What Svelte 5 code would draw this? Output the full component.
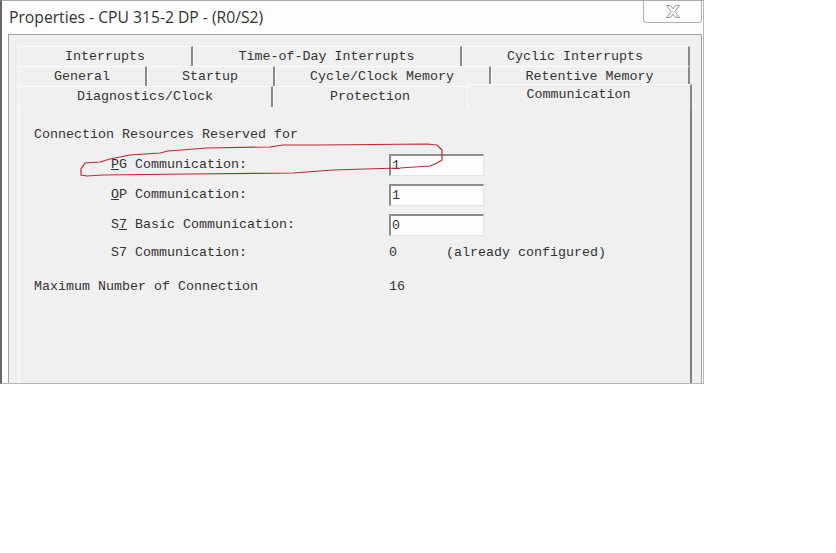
<script>
  const rows1 = ['Interrupts', 'Time-of-Day Interrupts', 'Cyclic Interrupts'];
  const rows2 = ['General', 'Startup', 'Cycle/Clock Memory', 'Retentive Memory'];
  const red = 'M87 176 L81 175 L81 169 L85 163 L100 162 L110 159 L130 155 L160 153 L168 151 L207 148 L270 147 L283 145 L320 145 L427 144 L437 145 L442 150 L442 160 L437 163 L430 166 L400 168 L365 169 L333 170 L320 171 L293 173 L187 174 L103 175 L87 176';
</script>

<div class="page">
  <div class="window">
    <header class="titlebar">
      <span class="title">Properties - CPU 315-2 DP - (R0/S2)</span>
      <div class="close">
        <svg width="16" height="13" viewBox="0 0 16 13">
          <path d="M1.5 0.5 H5.5 L8 3.7 L10.5 0.5 H14.5 L10 6.5 L14.5 12.5 H10.5 L8 9.3 L5.5 12.5 H1.5 L6 6.5 Z" fill="#f4f4f4" stroke="#9a9a9a" stroke-width="1"/>
        </svg>
      </div>
    </header>
    <div class="client">
      <div class="tabrow r1">
        {#each rows1 as t}<div class="tab">{t}</div>{/each}
      </div>
      <div class="tabrow r2">
        {#each rows2 as t}<div class="tab">{t}</div>{/each}
      </div>
      <div class="tabrow r3">
        <div class="tab">Diagnostics/Clock</div>
        <div class="tab">Protection</div>
        <div class="tab active">Communication</div>
      </div>
      <div class="panel">
        <div class="heading">Connection Resources Reserved for</div>
        <div class="form">
          <div class="label"><u>P</u>G Communication:</div>
          <div class="field">1</div>
          <div class="label"><u>O</u>P Communication:</div>
          <div class="field">1</div>
          <div class="label">S<u>7</u> Basic Communication:</div>
          <div class="field">0</div>
        </div>
        <div class="static">
          <span class="label">S7 Communication:</span>
          <span class="val">0</span>
          <span>(already configured)</span>
        </div>
        <div class="max">
          <span class="maxlabel">Maximum Number of Connection</span>
          <span>16</span>
        </div>
      </div>
    </div>
  </div>
  <svg class="ink" width="836" height="553" viewBox="0 0 836 553">
    <path d={red} fill="none" stroke="#c0272d" stroke-width="1.2"/>
  </svg>
</div>

<style>
  :global(body) { margin: 0; background: #fff; }
  .page { position: relative; width: 836px; height: 553px; background: #fff; overflow: hidden; }
  .window {
    box-sizing: border-box; width: 704px; height: 384px; overflow: hidden;
    background: #fdfdfd; border-top: 1px solid #a8a8a8; border-left: 2px solid #666;
    border-right: 1px solid #b8b8b8; border-bottom: 1px solid #b4b4b4; padding-left: 6px; padding-right: 1px;
    display: flex; flex-direction: column;
  }
  .titlebar { height: 33px; flex: none; display: flex; justify-content: space-between; align-items: flex-start; }
  .title { font: 15.7px/33px "Open Sans", sans-serif; color: #333; padding-left: 1px; }
  .close {
    box-sizing: border-box; width: 59px; height: 23px; margin-top: -1px;
    border: 1px solid #b0b0b0; border-top: none; border-radius: 0 0 4px 4px;
    display: flex; align-items: center; justify-content: center; background: #fdfdfd;
  }
  .client {
    flex: 1; box-sizing: border-box; background: #f0f0f0; border: 1px solid #a0a0a0; border-bottom: none;
    padding: 11px 0 0 10px; position: relative;
    font: 13.33px/20px "Liberation Mono", monospace; color: #333;
  }
  .tabrow { display: grid; width: 671px; height: 20px; }
  .r1 { grid-template-columns: 174px 269px 1fr; }
  .r2 { grid-template-columns: 128px 128px 216px 1fr; }
  .r3 { grid-template-columns: 254px 196px 223px; width: 673px; }
  .tab {
    box-sizing: border-box; text-align: center; white-space: nowrap;
    background: #f0f0f0; border-top: 1px solid #fbfbfb; border-left: 1px solid #fbfbfb;
    border-right: 2px solid #8a8a8a; padding-right: 1px; line-height: 19px;
  }
  .tab.active {
    margin-top: -2px; margin-left: -2px; height: 23px; position: relative; z-index: 1; line-height: 18px;
    border-right: 2px solid #888; padding-top: 1px;
  }
  .panel {
    box-sizing: border-box; margin-left: -1px; width: 674px; height: 278px;
    border-top: 1px solid #fbfbfb; border-left: 1px solid #fbfbfb; border-right: 2px solid #808080;
    padding: 18px 0 0 15px;
  }
  .heading { height: 20px; line-height: 20px; }
  .form {
    display: grid; grid-template-columns: 278px 95px; grid-auto-rows: 22px; row-gap: 8px;
    padding-left: 77px; margin-top: 9px; align-items: center;
  }
  .field {
    box-sizing: border-box; width: 95px; height: 22px; background: #fdfdfd;
    border-top: 2px solid #8c8c8c; border-left: 2px solid #8c8c8c;
    border-right: 1px solid #e4e4e4; border-bottom: 1px solid #e4e4e4;
    padding-left: 1px; line-height: 20px;
  }
  .static { display: flex; padding-left: 77px; margin-top: 7px; height: 20px; }
  .static .label { width: 278px; }
  .static .val { width: 57px; }
  .max { display: flex; margin-top: 14px; height: 20px; }
  .maxlabel { width: 355px; }
  .ink { position: absolute; left: 0; top: 0; pointer-events: none; }
</style>
